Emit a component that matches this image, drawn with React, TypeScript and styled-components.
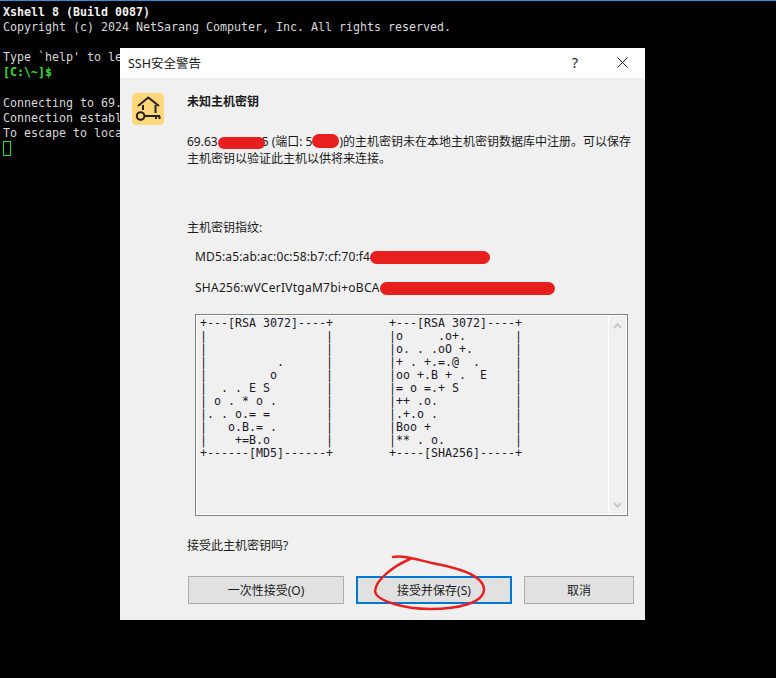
import React from "react";
import styled, { createGlobalStyle } from "styled-components";

const UI_FONT = `"Noto Sans", "Noto Sans CJK SC", sans-serif`;
const MONO_FONT = `"DejaVu Sans Mono", "Noto Sans CJK SC", monospace`;
const RED = "#e81f1f";

const GlobalStyle = createGlobalStyle`
  html, body {
    margin: 0;
    padding: 0;
    background: #000;
  }
`;

const Screen = styled.div`
  position: relative;
  width: 776px;
  height: 678px;
  overflow: hidden;
  background: #000;
  border-top: 1px solid #2f8fdc;
  box-sizing: border-box;
`;

const Terminal = styled.pre`
  margin: 0;
  padding: 4px 3px 0;
  font-family: ${MONO_FONT};
  font-size: 11.63px;
  line-height: 15.1px;
  color: #d8d8d8;
`;

const Strong = styled.span`
  font-weight: 700;
  color: #f2f2f2;
`;

const Prompt = styled.span`
  font-weight: 700;
  color: #30e030;
`;

const Cursor = styled.span`
  display: inline-block;
  width: 6px;
  height: 13px;
  border: 1px solid #20e020;
  vertical-align: -3px;
`;

const Dialog = styled.div`
  position: absolute;
  left: 120px;
  top: 47px;
  width: 525px;
  height: 572px;
  display: flex;
  flex-direction: column;
  background: #f0f0f0;
  font-family: ${UI_FONT};
  font-size: 12px;
  color: #1a1a1a;
`;

const TitleBar = styled.div`
  height: 30px;
  flex: none;
  display: flex;
  align-items: center;
  padding: 0 17px 2px 8px;
  box-sizing: border-box;
  background: #fff;
  font-size: 12.5px;
`;

const TitleText = styled.span`
  flex: 1;
`;

const HelpMark = styled.span`
  width: 45px;
  font-size: 14px;
`;

const Body = styled.div`
  flex: 1;
  display: flex;
  gap: 23px;
  padding: 15px 0 0 12px;
`;

const AppIcon = styled.div`
  flex: none;
  width: 32px;
  height: 32px;
  border-radius: 4px;
  background: #ffd67a;
`;

const Content = styled.div`
  flex: 1;
  min-width: 0;
  display: flex;
  flex-direction: column;
`;

const Heading = styled.div`
  font-weight: 700;
  line-height: 18px;
`;

const Paragraph = styled.p`
  margin: 22px 0 0;
  line-height: 17px;
  white-space: nowrap;
`;

const FingerprintLabel = styled.div`
  margin-top: 52px;
  line-height: 18px;
`;

const Fingerprint = styled.div<{ $top: number; $spacing: number }>`
  margin: ${(p) => p.$top}px 0 0 8px;
  line-height: 18px;
  letter-spacing: ${(p) => p.$spacing}px;
  white-space: nowrap;
`;

const Redacted = styled.span<{ $w: number; $h: number; $overlap?: number; $raise?: number }>`
  position: relative;
  top: ${(p) => -(p.$raise ?? 0)}px;
  display: inline-block;
  width: ${(p) => p.$w}px;
  height: ${(p) => p.$h}px;
  margin-right: ${(p) => -(p.$overlap ?? 0)}px;
  border-radius: ${(p) => p.$h / 2}px;
  background: ${RED};
  vertical-align: middle;
`;

const ArtBox = styled.div`
  margin: 17px 17px 0 8px;
  width: 433px;
  height: 202px;
  box-sizing: border-box;
  display: flex;
  border: 1px solid #828282;
  outline: 1px solid #fff;
  outline-offset: -2px;
`;

const Art = styled.pre`
  flex: 1;
  margin: 0;
  padding: 2px 0 0 4px;
  font-family: ${MONO_FONT};
  font-size: 11.63px;
  line-height: 13px;
  color: #1a1a2a;
`;

const ScrollTrack = styled.div`
  flex: none;
  width: 17px;
  display: flex;
  flex-direction: column;
  justify-content: space-between;
  align-items: center;
  padding: 6px 0 5px;
  margin: 1px 1px 1px 0;
  border-left: 1px solid #fff;
`;

const Question = styled.div`
  margin-top: 21px;
  line-height: 18px;
`;

const ButtonRow = styled.div`
  margin: 21px 0 0 1px;
  display: flex;
  gap: 12px;
`;

const Button = styled.button<{ $w: number; $primary?: boolean }>`
  width: ${(p) => p.$w}px;
  height: 28px;
  padding: 0;
  box-sizing: border-box;
  background: #e1e1e1;
  border: ${(p) => (p.$primary ? "2px solid #0078d7" : "1px solid #adadad")};
  font-family: ${UI_FONT};
  font-size: 12px;
  color: #1a1a1a;
`;

const Scribble = styled.svg`
  position: absolute;
  left: 0;
  top: 0;
  pointer-events: none;
`;

const ART = `+---[RSA 3072]----+        +---[RSA 3072]----+
|                 |        |o     .o+.       |
|                 |        |o. . .oO +.      |
|          .      |        |+ . +.=.@  .     |
|         o       |        |oo +.B + .  E    |
|  . . E S        |        |= o =.+ S        |
| o . * o .       |        |++ .o.           |
|. . o.= =        |        |.+.o .           |
|   o.B.= .       |        |Boo +            |
|    +=B.o        |        |** . o.          |
+------[MD5]------+        +----[SHA256]-----+`;

function HostKeyIcon() {
  return (
    <svg width="32" height="32" viewBox="0 0 32 32" fill="none" stroke="#222" strokeWidth="2">
      <path d="M6 13 L16.3 4.5 L27 13" />
      <path d="M11 12 V17" />
      <path d="M23.5 12 V20" />
      <circle cx="8.6" cy="23" r="3.8" />
      <path d="M12.5 23 H28 M24 23 V26 M27.5 23 V26" />
    </svg>
  );
}

function Chevron({ up }: { up?: boolean }) {
  return (
    <svg width="9" height="7" viewBox="0 0 9 7" fill="none" stroke="#c8c8c8" strokeWidth="2">
      <path d={up ? "M1 6 L4.5 2 L8 6" : "M1 1 L4.5 5 L8 1"} />
    </svg>
  );
}

export default function App() {
  return (
    <Screen>
      <GlobalStyle />
      <Terminal>
        <Strong>Xshell 8 (Build 0087)</Strong>
        {"\nCopyright (c) 2024 NetSarang Computer, Inc. All rights reserved.\n\nType `help' to learn how to use Xshell prompt.\n"}
        <Prompt>[C:\~]$</Prompt>
        {"\n\nConnecting to 69.63.0.0:50000...\nConnection established.\nTo escape to local shell, press 'Ctrl+Alt+]'.\n"}
        <Cursor />
      </Terminal>
      <Dialog>
        <TitleBar>
          <TitleText>SSH安全警告</TitleText>
          <HelpMark>?</HelpMark>
          <svg width="11" height="11" viewBox="0 0 11 11" stroke="#222" strokeWidth="1">
            <path d="M0.5 0.5 L10.5 10.5 M10.5 0.5 L0.5 10.5" />
          </svg>
        </TitleBar>
        <Body>
          <AppIcon>
            <HostKeyIcon />
          </AppIcon>
          <Content>
            <Heading>未知主机密钥</Heading>
            <Paragraph>
              69.63<Redacted $w={47} $h={12} $overlap={3} />5 (端口: 5<Redacted $w={27} $h={14} $raise={2} />)的主机密钥未在本地主机密钥数据库中注册。可以保存
              <br />
              主机密钥以验证此主机以供将来连接。
            </Paragraph>
            <FingerprintLabel>主机密钥指纹:</FingerprintLabel>
            <Fingerprint $top={11} $spacing={0.14}>
              MD5:a5:ab:ac:0c:58:b7:cf:70:f4<Redacted $w={120} $h={13} />
            </Fingerprint>
            <Fingerprint $top={13} $spacing={0.26}>
              SHA256:wVCerIVtgaM7bi+oBCA<Redacted $w={175} $h={13} />
            </Fingerprint>
            <ArtBox>
              <Art>{ART}</Art>
              <ScrollTrack>
                <Chevron up />
                <Chevron />
              </ScrollTrack>
            </ArtBox>
            <Question>接受此主机密钥吗?</Question>
            <ButtonRow>
              <Button $w={156}>一次性接受(O)</Button>
              <Button $w={156} $primary>
                接受并保存(S)
              </Button>
              <Button $w={110}>取消</Button>
            </ButtonRow>
          </Content>
        </Body>
      </Dialog>
      <Scribble width="776" height="678" viewBox="0 0 776 678" fill="none">
        <path
          d="M410 558 C394 565 376 578 375 590 C376 600 405 608 430 608 C458 608 484 602 484 588 C483 574 458 567 432 562 C416 558 402 554 393 556"
          stroke={RED}
          strokeWidth="2.5"
          strokeLinecap="round"
        />
      </Scribble>
    </Screen>
  );
}
